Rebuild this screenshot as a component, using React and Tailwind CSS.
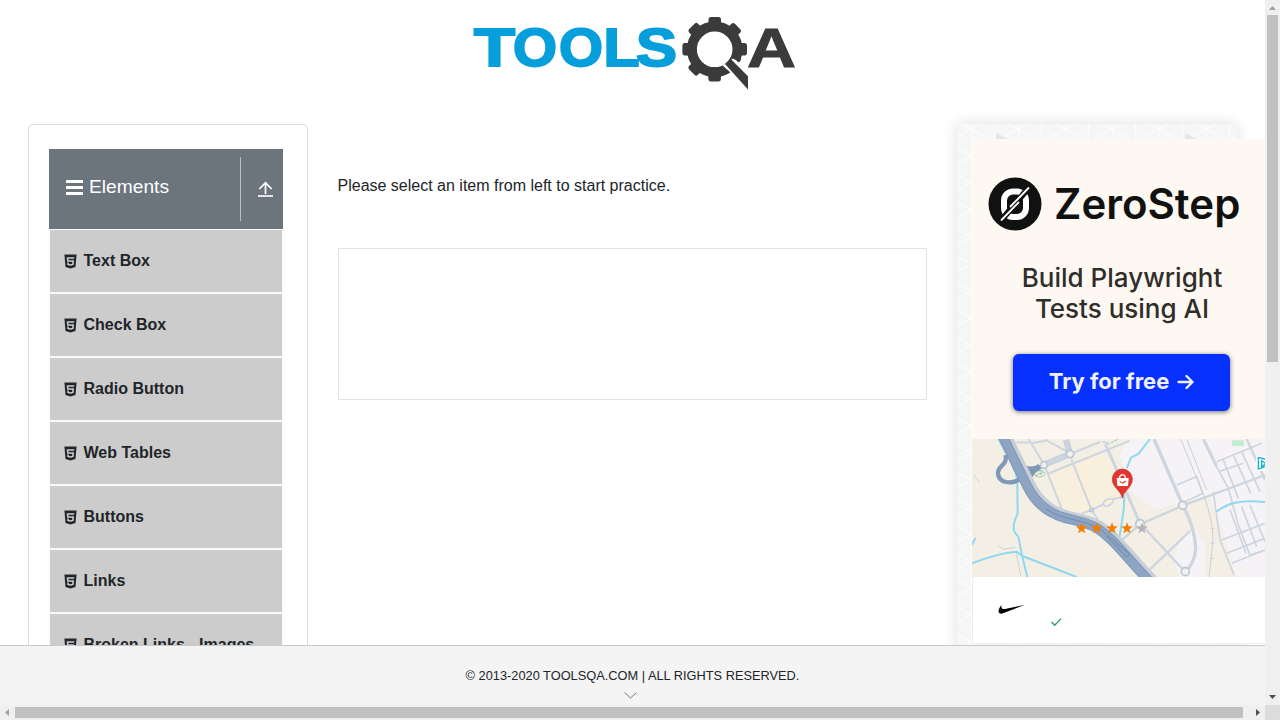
import React from "react";
import { AiFillHtml5 } from "react-icons/ai";

const items = ["Text Box", "Check Box", "Radio Button", "Web Tables", "Buttons", "Links", "Broken Links - Images"];

function Logo() {
  const teeth = [0, 45, 90, 180, 225, 270, 315];
  return (
    <svg width="322" height="76" viewBox="473 15 322 76" className="block" fontFamily="Liberation Sans, Arial, sans-serif" fontWeight="700">
      <g fill="#069fdc" stroke="#069fdc" strokeWidth="2" fontSize="54">
        <text x="474" y="66" textLength="41" lengthAdjust="spacingAndGlyphs">T</text>
        <text x="513" y="66" textLength="44" lengthAdjust="spacingAndGlyphs">O</text>
        <text x="559" y="66" textLength="44" lengthAdjust="spacingAndGlyphs">O</text>
        <text x="603.5" y="66" textLength="36" lengthAdjust="spacingAndGlyphs">L</text>
        <text x="636" y="66" textLength="41" lengthAdjust="spacingAndGlyphs">S</text>
      </g>
      <g fill="#3b3b3b">
        <circle cx="714.7" cy="49.3" r="22.8" fill="none" stroke="#3b3b3b" strokeWidth="10" />
        {teeth.map((a) => (
          <path key={a} d="M704.5 26 L708.5 23.5 V19 Q708.7 17 711 17 H718.5 Q720.8 17 721 19 V23.5 L725 26Z" transform={`rotate(${a} 714.7 49.3)`} />
        ))}
        <path d="M722.5 65.5 L733 58.5 L741.5 63 L752 74 V94 L730 72Z" fill="#fff" />
        <path d="M725 64 L730.5 58.8 L748 76.3 V89.5Z" />
        <path d="M733 57 L738.5 62.5 L741 60 L738 54Z" />
        <text x="747" y="66.7" fontSize="56" stroke="#3b3b3b" strokeWidth="1" textLength="49" lengthAdjust="spacingAndGlyphs">A</text>
      </g>
    </svg>
  );
}

function Sidebar() {
  return (
    <aside className="ml-7 h-[700px] w-[280px] shrink-0 rounded-[5px] border border-[#dcdcdc] px-5 pt-6">
      <div className="flex h-20 w-[234px] items-center bg-[#6c757d] pl-[17px] text-white">
        <svg width="17" height="17" viewBox="0 0 17 17" fill="currentColor" className="-mt-[3px]">
          <rect y="1" width="17" height="3" rx="0.6" />
          <rect y="7" width="17" height="3" rx="0.6" />
          <rect y="13" width="17" height="3" rx="0.6" />
        </svg>
        <span className="-mt-1 ml-[6px] text-[19.2px]">Elements</span>
        <div className="ml-auto flex h-16 w-[43px] items-center border-l border-[#c1bdb8] pl-[17px]">
          <svg width="15" height="16" viewBox="0 0 15 16" fill="none" stroke="currentColor" strokeWidth="1.7" className="-mt-px">
            <path d="M7.5 13 V1.5 M1.3 8 L7.5 1.6 L13.7 8" />
            <path d="M0 15 H15" strokeWidth="2" stroke="#e4e6e8" />
          </svg>
        </div>
      </div>
      <ul className="w-[234px]">
        {items.map((name) => (
          <li key={name} className="flex h-16 items-center border border-[#fafafa] bg-[#ccc] pl-[11.5px] font-bold text-[#212529]">
            <AiFillHtml5 size={17} className="shrink-0" />
            <span className="ml-[5px] whitespace-nowrap text-base">{name}</span>
          </li>
        ))}
      </ul>
    </aside>
  );
}

function ZeroStepAd() {
  return (
    <div className="flex h-[300px] w-[300px] shrink-0 flex-col bg-[#fdf8f1] font-[Inter,sans-serif]">
      <div className="flex h-[105px] items-end pl-4">
        <svg width="55" height="55" viewBox="0 0 55 55" className="mb-[12px] shrink-0">
          <circle cx="27" cy="27" r="26.5" fill="#111" />
          <rect x="16" y="14.5" width="22" height="25.5" rx="9" fill="none" stroke="#fff" strokeWidth="6" />
          <path d="M13.5 43 L40.5 11" stroke="#111" strokeWidth="6" />
          <path d="M13 43.5 L31 25 M22 30 L41 10.5" stroke="#fff" strokeWidth="1.8" />
        </svg>
        <span className="ml-[11px] text-[42px] leading-[80px] font-semibold text-[#111]">ZeroStep</span>
      </div>
      <div className="mt-[18px] text-center text-[26px] leading-[31px] font-medium text-[#302d2a]">
        Build Playwright<br />Tests using AI
      </div>
      <div className="mt-[30px] ml-[41px] flex h-[57px] w-[217px] items-center justify-center gap-2 rounded-[6px] bg-[#0630fd] pb-[2px] text-[22px] font-bold text-[#eef1ff] shadow-[0_1px_5px_rgba(0,0,0,0.55)]">
        Try for free
        <svg width="17" height="16" viewBox="0 0 17 16" fill="none" stroke="currentColor" strokeWidth="2.3" strokeLinecap="round" strokeLinejoin="round">
          <path d="M1.5 8 H15.5 M9.5 2 L15.5 8 L9.5 14" />
        </svg>
      </div>
    </div>
  );
}

const starPoints = "0,-18 4.5,-6 17,-5.5 7.2,2.5 10.5,15 0,8 -10.5,15 -7.2,2.5 -17,-5.5 -4.5,-6";
const highway = "M127 15 C155 75 180 125 200 165 C225 218 262 248 310 262 C345 272 375 274 410 294 C460 325 495 378 570 456";

function MapAd() {
  return (
    <svg width="293" height="138" viewBox="36 27 879 414" className="block shrink-0">
      <rect x="36" y="27" width="879" height="414" fill="#f4efe4" />
      <path d="M500 27 L480 75 L515 190 L590 240 L665 215 L750 200 L790 310 L830 441 H915 V27Z" fill="#f5f3f5" />
      <path d="M265 135 L400 66 L450 90 L500 200 L370 250 L305 235Z" fill="#f8efdc" />
      <path d="M640 390 L665 320 L705 300 L735 340 L735 441 H660Z" fill="#f5f3f5" />
      <rect x="816" y="31" width="36" height="17" fill="#c1edd0" />
      <g fill="none" stroke="#cdd6e0" strokeWidth="6">
        <path d="M206 27 L252 103 L305 235 M170 37 L227 38 L263 30 M258 30 L330 70 M262 132 L510 32 M330 72 L420 36 M334 88 L395 240 L415 270 M365 250 L395 240 L432 222 M458 207 L495 200 M427 35 L450 42" />
        <path d="M436 42 L540 280" strokeWidth="9" />
        <path d="M582 27 L668 225 C690 265 704 310 707 350 C707 385 692 410 675 425" strokeWidth="10" />
        <path d="M545 285 L675 425 M480 335 L540 283 L668 227 L915 135 M570 418 L690 303" strokeWidth="7" />
        <path d="M730 27 L770 110" strokeWidth="9" />
        <path d="M860 27 L893 100 L915 150" strokeWidth="7" />
        <path d="M770 110 L805 175 L835 285 L870 375 L915 360 M770 95 L905 40 M650 165 L710 140 L728 190 L675 215 M760 185 L780 330 L822 435 M775 125 L850 100 M785 330 L915 280 M800 370 L915 325 M815 400 L915 360 M845 230 L890 350 M870 225 L915 335 M810 240 L858 370 M790 90 L835 205 M820 75 L872 190 M845 65 L900 185" strokeWidth="5" />
        <path d="M430 222 C430 207 460 200 460 213 C455 227 432 235 430 222" strokeWidth="5" />
      </g>
      <path d="M662 27 L725 180 C755 260 762 300 757 350 L747 441 M680 27 L740 180 M752 295 H764 M752 340 H764 M750 385 H762" fill="none" stroke="#cfcfd2" strokeWidth="3" />
      <path d="M42 135 L58 155 M115 348 L130 358 L165 352 M168 365 L183 441" fill="none" stroke="#cdd0d6" strokeWidth="3" />
      <g fill="none" stroke="#8fd8ee" strokeWidth="6">
        <path d="M115 27 L150 90 C162 120 173 130 172 170 L173 250 C150 300 165 310 175 320 L187 380 L202 441 M36 400 Q110 370 170 365 L187 378 L350 441 M36 344 L47 323" />
        <path d="M570 27 L535 72 L513 83 L500 115 M493 195 L491 240 L478 325 M770 245 C800 220 840 208 915 216" />
      </g>
      <g fill="none" stroke="#7f98b8">
        <path d="M182 146 C155 165 113 160 114 127 C116 103 142 108 137 75" strokeWidth="13" />
        <path d="M185 110 Q215 125 240 108 M203 155 Q210 128 240 110" strokeWidth="15" />
        <path d={highway} stroke="#c8ced8" strokeWidth="33" transform="translate(8 -5)" />
        <path d={highway} strokeWidth="30" />
        <path d={highway} stroke="#8da5c3" strokeWidth="24" />
        <path d="M258 237 C310 272 365 265 425 300 L508 372 Q505 385 497 378 L440 318" stroke="#6f8aae" strokeWidth="3" />
      </g>
      <path d="M250 105 L330 72 L318 30" fill="none" stroke="#b9c5d3" strokeWidth="18" />
      <path d="M250 105 L330 72 L318 30" fill="none" stroke="#cdd6e0" strokeWidth="14" />
      <g fill="#f4f1ea" stroke="#bac6d5" strokeWidth="5">
        <circle cx="252" cy="105" r="10" /><circle cx="330" cy="72" r="11" />
        <circle cx="540" cy="282" r="13" /><circle cx="668" cy="226" r="12" /><circle cx="676" cy="425" r="12" />
        <circle cx="395" cy="240" r="5" />
      </g>
      <path d="M222 132 Q240 110 256 132 Q240 150 222 132 M238 118 L246 140 M225 138 L250 125 M453 38 L475 27" fill="none" stroke="#7cc6a0" strokeWidth="3" strokeDasharray="8 3" />
      <path d="M487 204 C483 181 457 173 457 147 A30 30 0 0 1 517 147 C517 173 491 181 487 204Z" fill="#e3352d" stroke="#b92a27" strokeWidth="2" />
      <path d="M470 144 H506 L504 168 H472Z" fill="#fff" />
      <path d="M479 146 V140 Q487 128 496 140 V146" fill="none" stroke="#fff" strokeWidth="4" />
      <path d="M479 153 Q487 164 497 153" fill="none" stroke="#e3352d" strokeWidth="3.5" />
      {[365, 410, 456, 501, 546].map((x, i) => (
        <polygon key={x} points={starPoints} transform={`translate(${x} 295)`} fill={i < 4 ? "#f57c00" : "#b5b5b5"} />
      ))}
      <rect x="888" y="78" width="27" height="45" fill="#fff" />
      <path d="M915 87 L895 83 V117 L915 110 M905 92 V110 L918 101Z" fill="none" stroke="#12b5cb" strokeWidth="4" />
    </svg>
  );
}

function AdColumn() {
  return (
    <div className="relative ml-[30px] h-[700px] w-[280px] shrink-0 bg-[#f6f6f6] shadow-[0_0_14px_rgba(0,0,0,0.13)]">
      <svg className="absolute inset-0" width="280" height="700">
        <defs>
          <pattern id="tri" x="14" y="5" width="47" height="54" patternUnits="userSpaceOnUse">
            <path d="M0 0 L47 27 L0 54 M47 0 L0 27 L47 54 M.5 0 V54 M23.5 0 V54" fill="none" stroke="#fff" strokeWidth="1.2" strokeOpacity="0.75" />
          </pattern>
        </defs>
        <rect width="280" height="700" fill="url(#tri)" />
        <path d="M39 9 L51 15 H39Z M228 9 L241 15 H228Z" fill="#e6e6e6" />
      </svg>
      <div className="relative flex flex-col pt-[15px] pl-[15px]">
        <ZeroStepAd />
        <MapAd />
        <div className="h-[67px] w-[300px] border-l border-b border-[#eee] bg-white pt-[27px] pl-[25px]">
          <svg width="68" height="26" viewBox="0 0 68 26">
            <path d="M3.5 1 Q0 5.5 .5 8 Q2 11 7 8.5 L27 .8 L7 5 Q2.5 5.8 3.5 1Z" fill="#000" />
            <path d="M53.5 18 L56.7 21.3 L63 14.6" fill="none" stroke="#25a077" strokeWidth="1.3" />
          </svg>
        </div>
      </div>
    </div>
  );
}

export default function App() {
  return (
    <div className="grid h-[720px] w-[1280px] grid-cols-[1265px_15px] grid-rows-[705px_15px] overflow-hidden bg-white font-['Liberation_Sans',Arial,sans-serif] text-[#212529]">
      <div className="flex min-w-0 flex-col overflow-hidden">
        <div className="h-[645px] overflow-hidden">
          <header className="flex h-[124px] pt-[15px] pl-[473px]">
            <Logo />
          </header>
          <div className="flex items-start">
            <Sidebar />
            <main className="ml-[30px] w-[589px] shrink-0 pt-[50px]">
              <p className="-ml-[0.5px] text-base">Please select an item from left to start practice.</p>
              <div className="mt-[50px] h-[152px] border border-[#e3e3e3]" />
            </main>
            <AdColumn />
          </div>
        </div>
        <footer className="flex h-[60px] flex-col items-center border-t border-[#c8c8c8] bg-[#f4f4f4] pt-5">
          <span className="text-[12.8px] leading-5">© 2013-2020 TOOLSQA.COM | ALL RIGHTS RESERVED.</span>
          <svg width="13" height="7" viewBox="0 0 13 7" fill="none" stroke="#777" className="mt-[6px] mr-1">
            <path d="M.5 .5 L6.5 6 L12.5 .5" />
          </svg>
        </footer>
      </div>
      <div className="flex flex-col items-center bg-[#f0f0f0]">
        <svg width="15" height="15"><path d="M4 10 L7.5 6 L11 10Z" fill="#a0a0a0" /></svg>
        <div className="h-[347px] w-[11px] bg-[#c1c1c1]" />
        <svg width="15" height="15" className="mt-auto"><path d="M4 5 H11 L7.5 9Z" fill="#505050" /></svg>
      </div>
      <div className="flex items-center bg-[#f0f0f0]">
        <svg width="15" height="15"><path d="M9 4 V11 L5 7.5Z" fill="#a0a0a0" /></svg>
        <div className="h-[11px] w-[1228px] bg-[#c1c1c1]" />
        <svg width="15" height="15" className="ml-auto"><path d="M6 4 V11 L10 7.5Z" fill="#505050" /></svg>
      </div>
      <div className="bg-[#dcdcdc]" />
    </div>
  );
}
